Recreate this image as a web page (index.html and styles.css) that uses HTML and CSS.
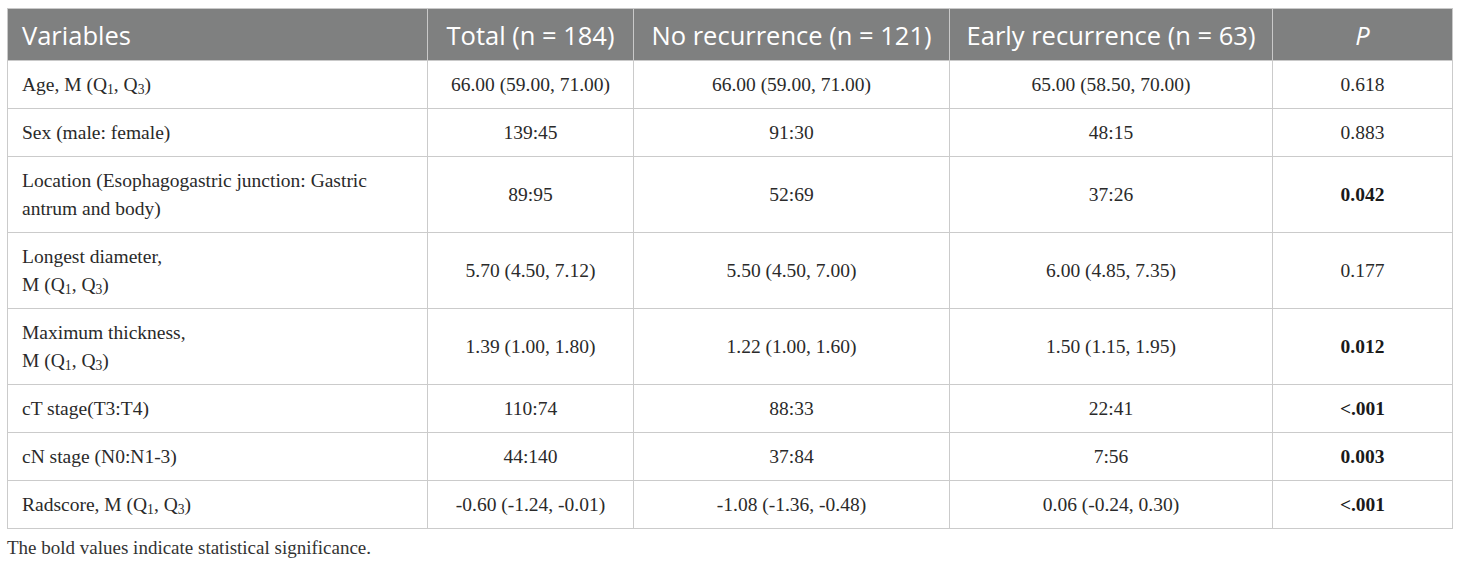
FILE: index.html
```html
<!DOCTYPE html>
<html lang="en">
<head>
<meta charset="utf-8">
<title>Table</title>
<link rel="stylesheet" href="styles.css">
</head>
<body>
<div class="wrap">
<table class="data">
  <colgroup>
    <col class="c1"><col class="c2"><col class="c3"><col class="c4"><col class="c5">
  </colgroup>
  <thead>
    <tr>
      <th class="left">Variables</th>
      <th>Total (n = 184)</th>
      <th>No recurrence (n = 121)</th>
      <th>Early recurrence (n = 63)</th>
      <th><i>P</i></th>
    </tr>
  </thead>
  <tbody>
    <tr><td class="left">Age, M (Q<sub>1</sub>, Q<sub>3</sub>)</td><td>66.00 (59.00, 71.00)</td><td>66.00 (59.00, 71.00)</td><td>65.00 (58.50, 70.00)</td><td>0.618</td></tr>
    <tr><td class="left">Sex (male: female)</td><td>139:45</td><td>91:30</td><td>48:15</td><td>0.883</td></tr>
    <tr><td class="left">Location (Esophagogastric junction: Gastric antrum and body)</td><td>89:95</td><td>52:69</td><td>37:26</td><td><b>0.042</b></td></tr>
    <tr><td class="left">Longest diameter,<br>M (Q<sub>1</sub>, Q<sub>3</sub>)</td><td>5.70 (4.50, 7.12)</td><td>5.50 (4.50, 7.00)</td><td>6.00 (4.85, 7.35)</td><td>0.177</td></tr>
    <tr><td class="left">Maximum thickness,<br>M (Q<sub>1</sub>, Q<sub>3</sub>)</td><td>1.39 (1.00, 1.80)</td><td>1.22 (1.00, 1.60)</td><td>1.50 (1.15, 1.95)</td><td><b>0.012</b></td></tr>
    <tr><td class="left">cT stage(T3:T4)</td><td>110:74</td><td>88:33</td><td>22:41</td><td><b>&lt;.001</b></td></tr>
    <tr><td class="left">cN stage (N0:N1-3)</td><td>44:140</td><td>37:84</td><td>7:56</td><td><b>0.003</b></td></tr>
    <tr><td class="left">Radscore, M (Q<sub>1</sub>, Q<sub>3</sub>)</td><td>-0.60 (-1.24, -0.01)</td><td>-1.08 (-1.36, -0.48)</td><td>0.06 (-0.24, 0.30)</td><td><b>&lt;.001</b></td></tr>
  </tbody>
</table>
<p class="note">The bold values indicate statistical significance.</p>
</div>
</body>
</html>
```
FILE: styles.css
```css
html, body {
  margin: 0;
  padding: 0;
  background: #ffffff;
}
.wrap {
  padding: 8px 0 0 7px;
}
.data {
  border-collapse: collapse;
  table-layout: fixed;
  width: 1445px;
  font-family: "Liberation Serif", "Times New Roman", serif;
  font-size: 19.5px;
  color: #2a2a2a;
}
.c1 { width: 420px; }
.c2 { width: 206px; }
.c3 { width: 316px; }
.c4 { width: 323px; }
.c5 { width: 180px; }
.data th {
  background: #7f8080;
  color: #ffffff;
  font-family: "Open Sans", "Noto Sans", sans-serif;
  font-weight: 400;
  font-size: 25.5px;
  line-height: 32px;
  padding: 10px 14px 9px;
  text-align: center;
  border: 1px solid #c9c9c9;
  white-space: nowrap;
}
.data td {
  line-height: 28px;
  padding: 9.5px 14px 9.5px;
  text-align: center;
  border: 1px solid #cbcbcb;
  vertical-align: middle;
}
.data th.left,
.data td.left {
  text-align: left;
}
.data sub {
  font-size: 0.7em;
  line-height: 0;
  vertical-align: -0.25em;
}
.data b {
  font-weight: 700;
  color: #1a1a1a;
}
.note {
  margin: 8px 0 0 0;
  font-family: "Liberation Serif", "Times New Roman", serif;
  font-size: 19px;
  color: #333;
}
```
